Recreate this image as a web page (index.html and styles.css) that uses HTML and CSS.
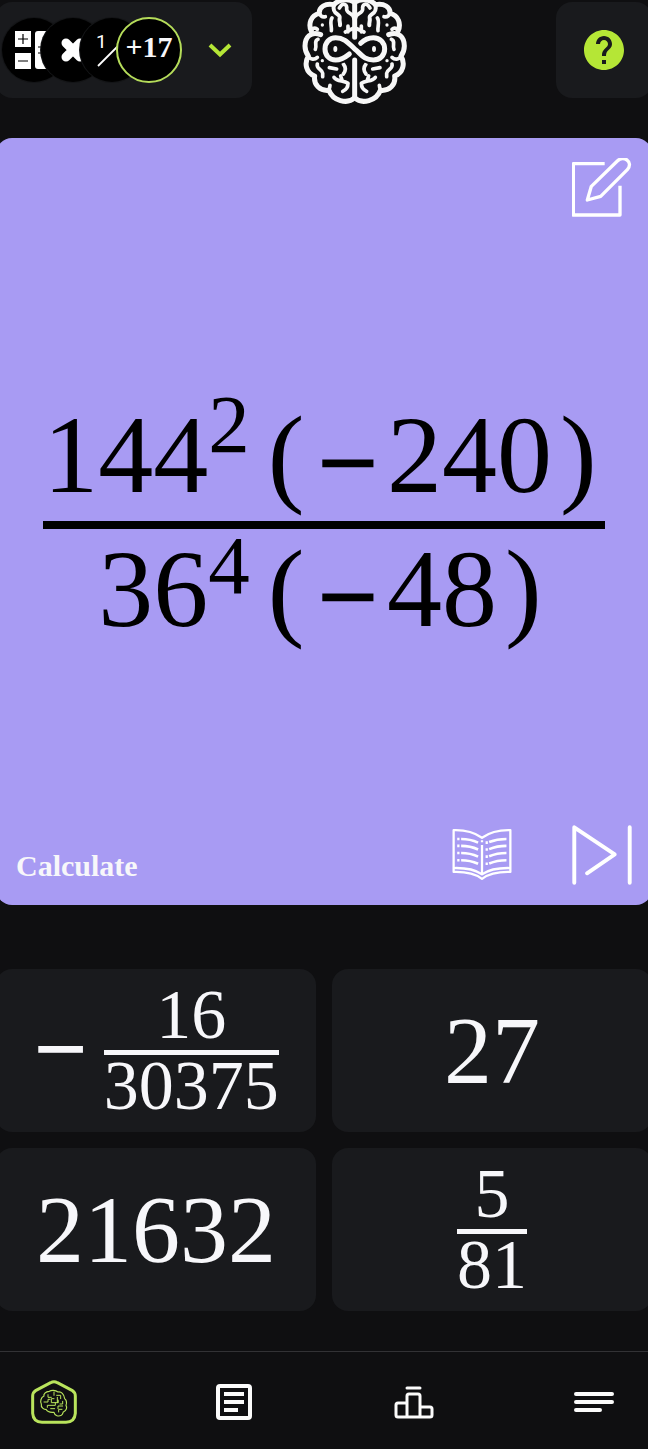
FILE: index.html
```html
<!DOCTYPE html>
<html lang="en">
<head>
    <meta charset="UTF-8">
    <meta name="viewport" content="width=device-width, initial-scale=1.0">
    <title>Calculate</title>
    <link rel="stylesheet" href="styles.css">
</head>
<body>

<div class="container">
    <header class="header">
        <button type="button" class="topics" aria-label="Topics">
            <span class="topic">
                <svg viewBox="0 0 64 64" fill="#fff">
                    <rect x="13" y="13" width="16" height="16"/>
                    <rect x="13" y="35" width="16" height="16"/>
                    <rect x="33" y="13" width="18" height="38" rx="3"/>
                    <path d="M21 16v10M16 21h10M16 43h10M36 29h10M36 35h10" stroke="#000" stroke-width="1.2"/>
                </svg>
            </span>
            <span class="topic">
                <svg viewBox="0 0 64 64" fill="none" stroke="#fff" stroke-width="9" stroke-linecap="round">
                    <path d="M25 25L39 39M39 25L25 39"/>
                </svg>
            </span>
            <span class="topic">
                <svg viewBox="0 0 64 64">
                    <text class="topic-digit" x="16" y="30">1</text>
                    <path d="M18 48L44 22" stroke="#fff" stroke-width="1.8"/>
                </svg>
            </span>
            <span class="topic topic-more">+17</span>
            <svg class="chevron" viewBox="0 0 24 16" fill="none" stroke-width="4">
                <path d="M2 3L12 12.500L22 3"/>
            </svg>
        </button>

        <svg class="logo" viewBox="36 -6 318 318" fill="none" stroke="#f7f7f7" stroke-width="15" stroke-linecap="round" stroke-linejoin="round">
            <defs>
                <g id="half">
                    <!-- outline -->
                    <path d="M192 6C178-4 148-4 132 14C106 8 86 22 88 40C62 46 54 72 64 94"/>
                    <path d="M92 104C62 92 45 112 45 138C45 152 49 160 55 168C42 190 48 218 74 228C70 254 90 274 117 271C128 302 172 314 193 294"/>
                    <!-- folds -->
                    <path d="M132 14C124 44 152 40 149 54C147 62 151 68 150 76" stroke-width="12"/>
                    <path d="M148 24C160 4 172 14 170 28C170 42 192 38 192 56M192 84L166 96M174 78V96" stroke-width="11"/>
                    <path d="M88 40C92 50 98 52 106 50M126 54C118 64 126 82 124 92" stroke-width="11"/>
                    <path d="M64 94C66 84 76 82 82 88M84 118C70 122 82 136 76 148" stroke-width="11"/>
                    <path d="M54 168C62 180 74 180 82 172M82 192C78 208 96 206 98 220V230" stroke-width="11"/>
                    <path d="M118 203L140 207M160 192C168 202 168 212 160 222" stroke-width="11"/>
                    <path d="M116 270C120 262 120 262 120 256M132 232C142 246 160 240 174 250M152 228L156 240M174 250C174 262 168 270 158 274" stroke-width="11"/>
                    <circle cx="97" cy="75" r="5" fill="#f7f7f7" stroke="none"/>
                    <circle cx="97" cy="182" r="5" fill="#f7f7f7" stroke="none"/>
                    <ellipse cx="136" cy="147" rx="6" ry="9" fill="#f7f7f7" stroke="none"/>
                </g>
            </defs>
            <use href="#half"/>
            <use href="#half" transform="translate(388 0) scale(-1 1)"/>
            <path d="M194 0V112M194 180V292"/>
            <path d="M212 130C224 118 236 113 250 113C270 113 284 128 284 147C284 166 270 180 250 180C220 180 212 160 194 147C176 130 164 113 137 113C118 113 105 128 105 147C105 166 118 180 137 180C156 180 168 170 178 162" stroke="#0f0f11" stroke-width="27" stroke-linecap="butt"/>
            <path d="M212 130C224 118 236 113 250 113C270 113 284 128 284 147C284 166 270 180 250 180C220 180 212 160 194 147C176 130 164 113 137 113C118 113 105 128 105 147C105 166 118 180 137 180C156 180 168 170 178 162"/>
        </svg>

        <button type="button" class="help" aria-label="Help">
            <svg viewBox="0 0 24 24"><path d="M12 2C6.480 2 2 6.480 2 12s4.480 10 10 10 10-4.480 10-10S17.520 2 12 2zm1 17h-2v-2h2v2zm2.070-7.750l-.9.920C13.450 12.900 13 13.500 13 15h-2v-.5c0-1.100.450-2.100 1.170-2.830l1.240-1.260c.370-.360.590-.860.590-1.410 0-1.100-.9-2-2-2s-2 .9-2 2H8c0-2.210 1.790-4 4-4s4 1.790 4 4c0 .880-.360 1.680-.930 2.250z"/></svg>
        </button>
    </header>

    <main class="main">
        <section class="question">
            <div class="question-top">
                <button type="button" class="icon-btn" aria-label="Scratchpad">
                    <svg viewBox="96 475 180 180" fill="none" stroke="#fff" stroke-width="10" stroke-linejoin="round">
                        <path d="M194 492H100V646H240V558"/>
                        <path d="M142 601L154 560L232 484C250 466 282 486 262 510L182 590Z"/>
                    </svg>
                </button>
            </div>

            <div class="expression" role="math">
                <span class="fraction">
                    <span class="num">144<sup>2</sup><span class="open">(</span><span class="minus">−</span>240<span class="close">)</span></span>
                    <span class="den">36<sup>4</sup><span class="open">(</span><span class="minus">−</span>48<span class="close">)</span></span>
                </span>
            </div>

            <div class="question-bottom">
                <h1 class="title">Calculate</h1>
                <button type="button" class="icon-btn" aria-label="Theory">
                    <svg viewBox="34 43 184 184" fill="none" stroke="#fff" stroke-width="7" stroke-linejoin="round">
                        <path d="M39 59C70 58 100 64 126 82C152 64 182 58 213 59V187C180 186 150 190 126 208C102 190 72 186 39 187Z"/>
                        <path d="M39 175C72 174 102 178 126 194C150 178 180 174 213 175"/>
                        <path d="M126 104V194M126 90V96"/>
                        <path stroke-width="8" d="M62 86Q90 86 114 97M62 107Q90 107 114 118M62 129Q90 129 114 140M62 151Q90 151 114 162M50 86h7M50 107h7M50 129h7M50 151h7"/>
                        <path stroke-width="8" d="M201 86Q172 86 148 95M201 107Q172 107 148 117M201 129Q172 129 148 139M201 151Q172 151 148 161M137 97h7M137 118h7M137 140h7M137 162h7"/>
                    </svg>
                </button>
                <button type="button" class="icon-btn" aria-label="Skip">
                    <svg viewBox="394 43 184 184" fill="none" stroke="#fff" stroke-width="12" stroke-linecap="round" stroke-linejoin="round">
                        <path d="M401 220V50L525 133L440 191M571 50V220"/>
                    </svg>
                </button>
            </div>
        </section>

        <section class="answers">
            <button type="button" class="answer">
                <span class="value"><span class="minus">−</span><span class="fraction fraction-small"><span class="num">16</span><span class="den">30375</span></span></span>
            </button>
            <button type="button" class="answer"><span class="value">27</span></button>
            <button type="button" class="answer"><span class="value">21632</span></button>
            <button type="button" class="answer">
                <span class="value"><span class="fraction fraction-small"><span class="num">5</span><span class="den">81</span></span></span>
            </button>
        </section>
    </main>

    <nav class="nav">
        <a href="#" class="active" aria-label="Practice">
            <svg viewBox="90 114 144 144" fill="none" stroke="#b9e45c" stroke-linejoin="round" stroke-linecap="round">
                <path stroke-width="9" d="M152 128Q162 122 172 128L216 151Q226 158 226 168V220Q224 246 198 247H126Q100 246 98 220V168Q98 158 108 151Z"/>
                <path stroke-width="3.500" d="M148 154C136 154 130 164 132 168C122 172 120 186 124 192C122 202 132 210 138 208C142 216 152 218 162 217C164 228 176 230 184 226C190 222 188 218 190 216C200 212 202 202 198 196C202 188 198 178 194 176C192 162 184 154 174 156C166 150 154 150 148 154Z"/>
                <path stroke-width="3" d="M144 164V172H154M162 156V166M170 166H182V176M132 186H144V178H150M162 176H154V188H174V180M174 188V182M188 184V192H180M142 202V196H166V188M152 206H164M174 206V198H188M186 208H176V216M172 172V188"/>
            </svg>
        </a>
        <a href="#" aria-label="Articles">
            <svg viewBox="0 0 48 48" fill="none" stroke="#fbfbfb" stroke-width="4">
                <rect x="8" y="8" width="32" height="32" rx="2"/>
                <path d="M14 16H34M14 24H34M14 32H28"/>
            </svg>
        </a>
        <a href="#" aria-label="Leaderboard">
            <svg viewBox="0 0 48 48" fill="none" stroke="#fbfbfb" stroke-width="3" stroke-linejoin="round">
                <path d="M17 39V18Q17 16 19 16H28Q30 16 30 18V39M17 25H8Q6 25 6 27V37Q6 39 8 39H40Q42 39 42 37V31Q42 29 40 29H30"/>
                <path d="M17 10H30" stroke-linecap="round"/>
            </svg>
        </a>
        <a href="#" aria-label="Menu">
            <svg viewBox="0 0 48 48" fill="none" stroke="#fbfbfb" stroke-width="4" stroke-linecap="round">
                <path d="M6 16H42M6 24H42M6 32H30"/>
            </svg>
        </a>
    </nav>
</div>

</body>
</html>
```

FILE: styles.css
```css
* {
    box-sizing: border-box;
}
body {
    font-family: 'Liberation Serif', 'Times New Roman', serif;
    background-color: #0f0f11;
    color: #f7f7fa;
    margin: 0;
    overflow-x: hidden;
}
button {
    font-family: inherit;
    color: inherit;
    background: none;
    border: none;
    padding: 0;
    cursor: pointer;
}
svg {
    display: block;
}
.container {
    display: flex;
    flex-direction: column;
    min-height: 100vh;
    overflow: hidden;
}

/* header */
.header {
    display: flex;
    align-items: center;
    margin: 2px -4px 40px;
}
.topics {
    display: flex;
    align-items: center;
    width: 256px;
    height: 96px;
    padding-left: 6px;
    background-color: #191a1d;
    border-radius: 16px;
}
.topic {
    width: 64px;
    height: 64px;
    margin-right: -25px;
    border-radius: 50%;
    background-color: #000;
    box-shadow: 0 0 0 1px #141517;
    overflow: hidden;
}
.topic-digit {
    font-family: Roboto, sans-serif;
    font-size: 19px;
    fill: #fff;
}
.topic-more {
    width: 66px;
    height: 66px;
    margin: 0 26px 0 -3px;
    border: 2px solid #b5dc5a;
    box-shadow: none;
    font-size: 30px;
    font-weight: bold;
    line-height: 56px;
    text-align: center;
}
.chevron {
    width: 24px;
    height: 16px;
    stroke: #b5e636;
}
.logo {
    width: 106px;
    height: 106px;
    margin: -4px auto -6px 50px;
}
.help {
    display: flex;
    align-items: center;
    justify-content: center;
    width: 96px;
    height: 96px;
    background-color: #191a1d;
    border-radius: 16px;
}
.help svg {
    width: 48px;
    height: 48px;
    fill: #b5e636;
}

/* question card */
.main {
    flex: 1;
    display: flex;
    flex-direction: column;
    gap: 64px;
    margin: 0 -4px 40px;
}
.question {
    flex: 1;
    display: flex;
    flex-direction: column;
    padding: 20px;
    background-color: #a89bf3;
    border-radius: 16px;
}
.question-top {
    display: flex;
    justify-content: flex-end;
}
.question-bottom {
    display: flex;
    align-items: flex-end;
    gap: 60px;
}
.title {
    flex: 1;
    margin: 0;
    font-size: 30px;
    line-height: 38px;
}
.icon-btn svg {
    width: 60px;
    height: 60px;
}
.expression {
    flex: 1;
    display: flex;
    align-items: center;
    justify-content: center;
    color: #000;
    font-size: 110px;
    line-height: 110px;
}

/* math */
.fraction {
    display: inline-flex;
    flex-direction: column;
    align-items: center;
    white-space: nowrap;
}
.num {
    padding-bottom: 11px;
}
.den {
    display: block;
    align-self: stretch;
    padding-top: 5px;
    border-top: 8px solid;
    text-align: center;
}
sup {
    font-size: 83px;
    line-height: 0;
    vertical-align: 40px;
}
.den sup {
    vertical-align: 33px;
}
.open {
    margin: 0 12px 0 18px;
}
.close {
    margin: 0 8px;
}
.minus {
    margin-right: 8px;
    font-weight: bold;
    line-height: 0;
    vertical-align: -8px;
}

/* answers */
.answers {
    display: grid;
    grid-template-columns: 1fr 1fr;
    gap: 16px;
}
.answer {
    display: flex;
    align-items: center;
    justify-content: center;
    min-height: 163px;
    background-color: #191a1d;
    border-radius: 16px;
}
.value {
    font-size: 96px;
    line-height: 96px;
}
.value .minus {
    margin-right: 16px;
}
.fraction-small {
    font-size: 70px;
    line-height: 60px;
    vertical-align: middle;
}
.fraction-small .num {
    padding-bottom: 5px;
}
.fraction-small .den {
    padding-top: 1px;
    border-top-width: 5px;
}

/* bottom nav */
.nav {
    display: flex;
    justify-content: space-between;
    padding: 26px 30px 23px;
    border-top: 1px solid #323235;
}
.nav svg {
    width: 48px;
    height: 48px;
}
```
